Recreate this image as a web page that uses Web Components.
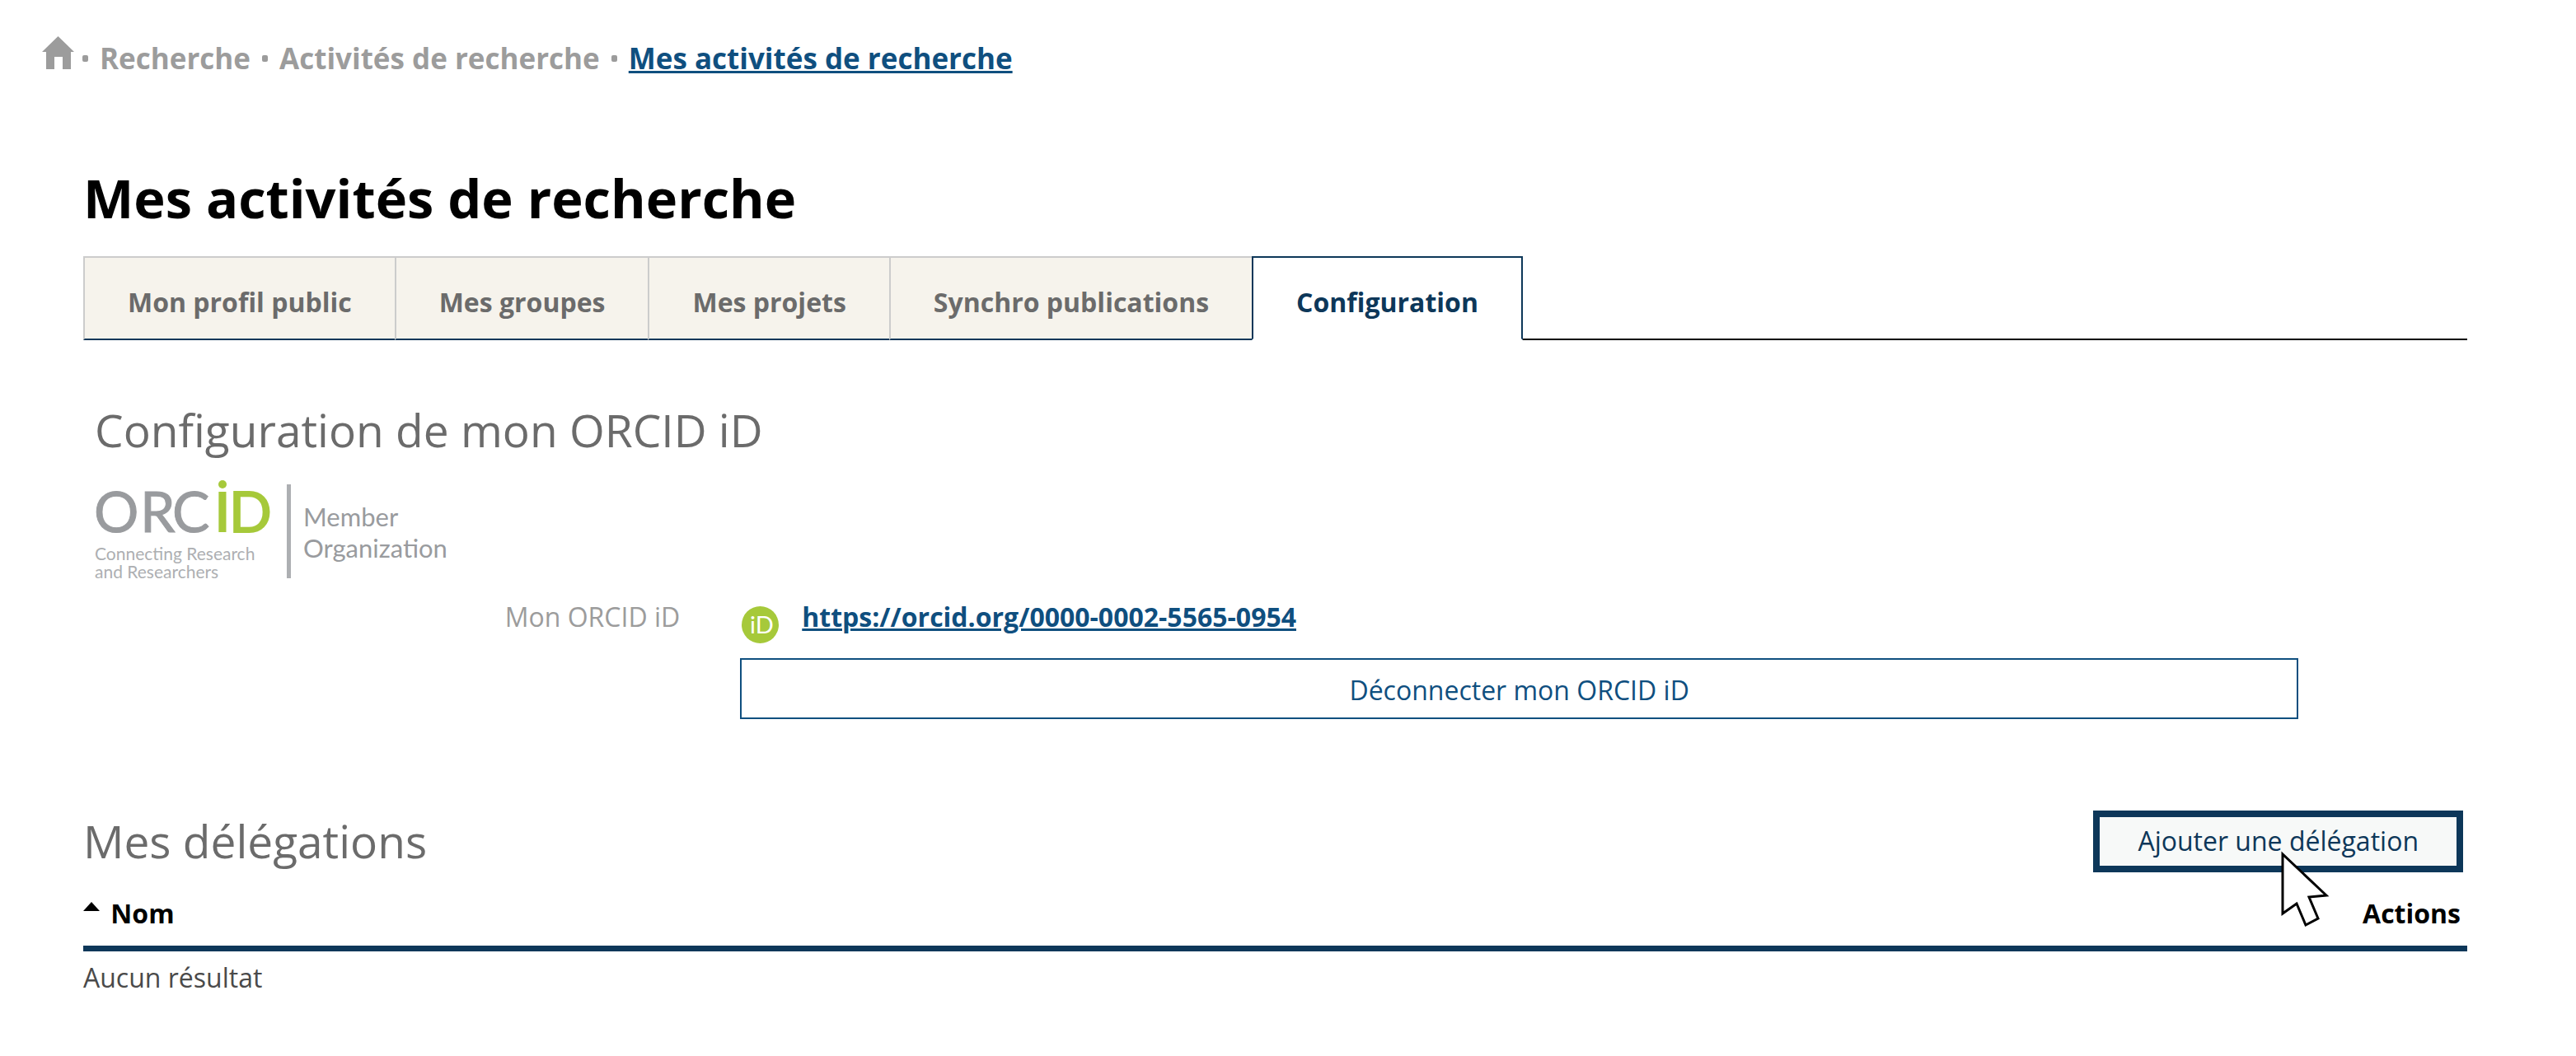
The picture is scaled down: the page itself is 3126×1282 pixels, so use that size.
<!DOCTYPE html>
<html lang="fr">
<head>
<meta charset="utf-8">
<title>Mes activités de recherche</title>
<style>
  body {
    margin: 0;
    background: #fff;
    color: #4a4a4a;
    font-family: "Open Sans", "Noto Sans", sans-serif;
    font-size: 32px;
    line-height: 44px;
  }

  main {
    padding: 0 132px 0 101px;
  }

  h1 {
    margin: 101px 0 27px;
    color: #000;
    font-size: 65px;
    line-height: 88px;
  }
</style>
</head>
<body>
  <bread-crumb>
    <a href="#">Recherche</a>
    <a href="#">Activités de recherche</a>
    <a href="#" aria-current="page">Mes activités de recherche</a>
  </bread-crumb>
  <main>
    <h1>Mes activités de recherche</h1>
    <tab-bar>
      <tab-item>Mon profil public</tab-item>
      <tab-item>Mes groupes</tab-item>
      <tab-item>Mes projets</tab-item>
      <tab-item>Synchro publications</tab-item>
      <tab-item selected>Configuration</tab-item>
    </tab-bar>
    <orcid-panel orcid="https://orcid.org/0000-0002-5565-0954">
      <span slot="title">Configuration de mon ORCID iD</span>
      <span slot="label">Mon ORCID iD</span>
      <span slot="action">Déconnecter mon ORCID iD</span>
    </orcid-panel>
    <delegation-list>
      <span slot="title">Mes délégations</span>
      <span slot="action">Ajouter une délégation</span>
      <span slot="empty">Aucun résultat</span>
    </delegation-list>
  </main>

<script>
function makeTemplate(html) {
  const template = document.createElement('template')
  template.innerHTML = html
  return template
}

const breadCrumbTemplate = makeTemplate(`
  <style>
    :host {
      display: block;
      padding: 47px 51px 0;
      font-size: 35px;
      font-weight: bold;
      line-height: 48px;
      color: #9c9c9c;
    }
    nav {
      display: flex;
      align-items: center;
      gap: 14px;
    }
    .home {
      display: flex;
      align-self: flex-start;
    }
    .home svg {
      width: 39px;
      height: 40px;
      margin-top: -3px;
      margin-right: -4px;
    }
    ::slotted(a) {
      color: #9c9c9c;
      text-decoration: none;
    }
    ::slotted(a[aria-current]) {
      color: #0f4f7f;
      text-decoration: underline;
      text-decoration-thickness: 3px;
    }
    .dot {
      width: 7px;
      height: 8px;
      border-radius: 2px;
      background: #9c9c9c;
    }
  </style>
  <nav aria-label="Fil d'Ariane">
    <a class="home" href="#" aria-label="Accueil">
      <svg viewBox="0 0 39 40"><path fill="#9c9c9c" d="M19.500 0L39 19H35V40H25V25H15V40H5V19H0Z"/></svg>
    </a>
  </nav>
`)

class BreadCrumb extends HTMLElement {
  constructor() {
    super()
    this.attachShadow({ mode: 'open' })
    this.shadowRoot.appendChild(breadCrumbTemplate.content.cloneNode(true))

    // one slot per link, with a dot before each
    const nav = this.shadowRoot.querySelector('nav')
    Array.from(this.children).forEach((link, index) => {
      const dot = document.createElement('span')
      dot.className = 'dot'
      const slot = document.createElement('slot')
      slot.name = 'link-' + index
      link.slot = slot.name
      nav.append(dot, slot)
    })
  }
}

const tabBarTemplate = makeTemplate(`
  <style>
    :host {
      display: flex;
    }
    .rest {
      flex: 1;
      border-bottom: 2px solid #000;
    }
  </style>
  <slot></slot>
  <div class="rest"></div>
`)

class TabBar extends HTMLElement {
  constructor() {
    super()
    this.attachShadow({ mode: 'open' })
    this.shadowRoot.appendChild(tabBarTemplate.content.cloneNode(true))
    this.setAttribute('role', 'tablist')
  }
}

const tabItemTemplate = makeTemplate(`
  <style>
    :host {
      display: block;
    }
    button {
      display: block;
      padding: 32px 52px 22px;
      border: 2px solid #ccc;
      border-right-width: 0;
      border-bottom-color: #0d3759;
      background: #f6f3ec;
      color: #6b6b6b;
      font: inherit;
      font-weight: bold;
    }
    :host([selected]) button {
      border: 2px solid #0d3759;
      border-bottom-color: transparent;
      background: #fff;
      color: #0d3759;
    }
  </style>
  <button type="button" role="tab"><slot></slot></button>
`)

class TabItem extends HTMLElement {
  constructor() {
    super()
    this.attachShadow({ mode: 'open' })
    this.shadowRoot.appendChild(tabItemTemplate.content.cloneNode(true))
    this.shadowRoot.querySelector('button').setAttribute('aria-selected', this.hasAttribute('selected'))
  }
}

const orcidLogoTemplate = makeTemplate(`
  <style>
    :host {
      display: block;
    }
    svg {
      display: block;
      width: 450px;
      height: 144px;
      margin-left: -10px;
      font-family: Lato, sans-serif;
    }
  </style>
  <svg viewBox="-10 -20 450 144" fill="#999b9e">
    <text x="-1 55 94" y="63" font-size="68" stroke="#999b9e">ORC</text>
    <g fill="#a6c93a">
      <circle cx="155" cy="5" r="5"/>
      <text x="145" y="63" font-size="67" font-weight="bold">I</text>
      <text x="163" y="63" font-size="68" stroke="#a6c93a" stroke-width="2">D</text>
    </g>
    <g font-size="21" fill="#adafb2">
      <text x="0" y="97">Connecting Research</text>
      <text x="0" y="119">and Researchers</text>
    </g>
    <rect x="233" y="5" width="5" height="114" fill="#adafb2"/>
    <g font-size="31">
      <text x="253" y="56">Member</text>
      <text x="253" y="94">Organization</text>
    </g>
  </svg>
`)

class OrcidLogo extends HTMLElement {
  constructor() {
    super()
    this.attachShadow({ mode: 'open' })
    this.shadowRoot.appendChild(orcidLogoTemplate.content.cloneNode(true))
  }
}

const orcidPanelTemplate = makeTemplate(`
  <style>
    :host {
      display: block;
      padding: 71px 0 0 14px;
    }
    h2 {
      margin: 0 0 3px;
      color: #6b6b6b;
      font-size: 55px;
      font-weight: normal;
      line-height: 76px;
    }
    .row {
      display: grid;
      grid-template-columns: 71fr 189fr;
      column-gap: 73px;
      padding: 20px 205px 0 0;
    }
    .label {
      color: #9c9c9c;
      text-align: right;
    }
    .value {
      display: flex;
      gap: 28px;
      padding-left: 2px;
      margin-bottom: 28px;
    }
    .value svg {
      width: 45px;
      height: 45px;
      margin-top: 9px;
      margin-bottom: -10px;
      font-family: Lato, sans-serif;
    }
    a {
      color: #0f4f7f;
      font-weight: bold;
      text-decoration-thickness: 3px;
    }
    button {
      display: block;
      width: 100%;
      padding: 15px 24px 11px;
      border: 2px solid #0f4f7f;
      background: #fff;
      color: #0f4f7f;
      font: inherit;
    }
  </style>
  <h2><slot name="title"></slot></h2>
  <orcid-logo></orcid-logo>
  <div class="row">
    <div class="label"><slot name="label"></slot></div>
    <div>
      <div class="value">
        <svg viewBox="0 0 45 45">
          <circle cx="22.500" cy="22.500" r="22.500" fill="#a6c93a"/>
          <text x="10" y="33" font-size="29" fill="#fff">iD</text>
        </svg>
        <a></a>
      </div>
      <button type="button"><slot name="action"></slot></button>
    </div>
  </div>
`)

class OrcidPanel extends HTMLElement {
  constructor() {
    super()
    this.attachShadow({ mode: 'open' })
    this.shadowRoot.appendChild(orcidPanelTemplate.content.cloneNode(true))
    this.shadowRoot.querySelector('a').href = this.getAttribute('orcid')
    this.shadowRoot.querySelector('a').innerText = this.getAttribute('orcid')
  }
}

const delegationListTemplate = makeTemplate(`
  <style>
    :host {
      display: block;
      padding-top: 110px;
    }
    header {
      display: flex;
      justify-content: space-between;
      align-items: center;
      padding-right: 5px;
    }
    h2 {
      margin: 0;
      color: #6b6b6b;
      font-size: 55px;
      font-weight: normal;
      line-height: 76px;
    }
    button {
      position: relative;
      padding: 7px 46px 8px;
      border: 8px solid #0d3759;
      background: #f7f9f8;
      color: #0d3759;
      font: inherit;
    }
    /* mouse pointer lying over the button */
    .pointer {
      position: absolute;
      left: 220px;
      top: 41px;
      width: 60px;
      height: 96px;
    }
    table {
      width: 100%;
      border-collapse: collapse;
    }
    th {
      padding: 28px 8px 17px 0;
      border-bottom: 7px solid #0d3759;
      color: #000;
      text-align: left;
    }
    th:last-child {
      text-align: right;
    }
    th svg {
      width: 20px;
      height: 11px;
      margin-right: 5px;
      vertical-align: 15px;
    }
    td {
      padding: 10px 0;
    }
  </style>
  <header>
    <h2><slot name="title"></slot></h2>
    <button type="button">
      <slot name="action"></slot>
      <svg class="pointer" viewBox="0 0 60 96"><path fill="#fff" stroke="#000" stroke-width="3" d="M2 4V76L19 64L30 90L45 82L34 56L55 54Z"/></svg>
    </button>
  </header>
  <table>
    <thead>
      <tr>
        <th><svg viewBox="0 0 20 11"><path d="M10 0L20 11H0Z"/></svg> Nom</th>
        <th>Actions</th>
      </tr>
    </thead>
    <tbody>
      <tr>
        <td colspan="2"><slot name="empty"></slot></td>
      </tr>
    </tbody>
  </table>
`)

class DelegationList extends HTMLElement {
  constructor() {
    super()
    this.attachShadow({ mode: 'open' })
    this.shadowRoot.appendChild(delegationListTemplate.content.cloneNode(true))
  }
}

window.customElements.define('bread-crumb', BreadCrumb)
window.customElements.define('tab-bar', TabBar)
window.customElements.define('tab-item', TabItem)
window.customElements.define('orcid-logo', OrcidLogo)
window.customElements.define('orcid-panel', OrcidPanel)
window.customElements.define('delegation-list', DelegationList)
</script>
</body>
</html>
